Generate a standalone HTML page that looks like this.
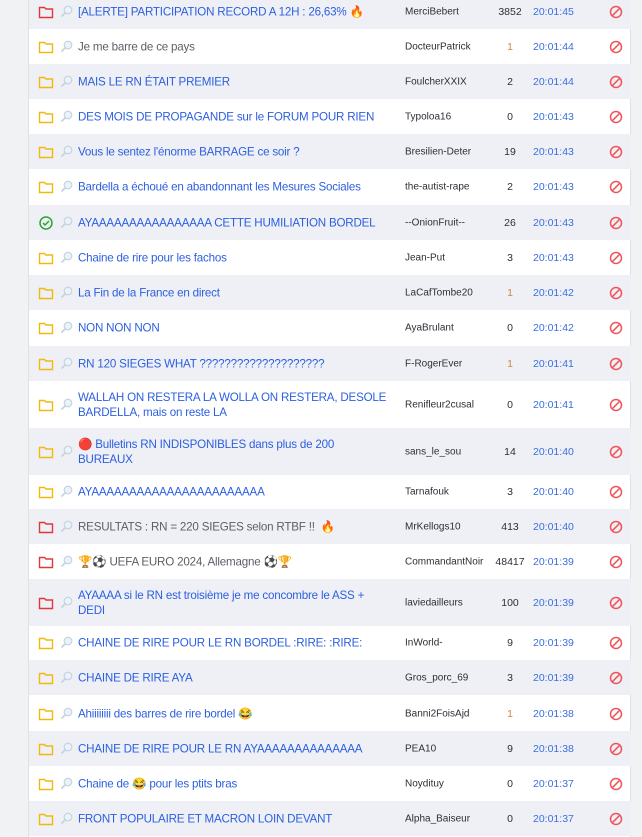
<!DOCTYPE html>
<html><head><meta charset="utf-8">
<style>
*{margin:0;padding:0;box-sizing:border-box}
body{width:642px;height:837px;overflow:hidden;background:#f1f2f4;font-family:"Liberation Sans",Arial,sans-serif;position:relative}
#list{position:absolute;left:28px;top:0;width:603px;height:837px;background:#fff;border-left:1px solid #dfe1e5;border-right:1px solid #dfe1e5}
.r{position:absolute;left:0;width:602px;height:35px}
.r.g{background:#eef0f5}
.r.t{height:47px}
.ic{position:absolute;left:9px;top:50%;margin-top:-7px;width:16px;height:14px}
.mg{position:absolute;left:31px;top:50%;margin-top:-7px;width:13px;height:13px}
.ti{position:absolute;left:49px;top:50%;transform:translateY(-50%);width:330px;font-size:11.6px;letter-spacing:-0.2px;line-height:15px;color:#2c5fe0;white-space:nowrap}
.ti.v{color:#5b5f66}
.au{position:absolute;left:376px;top:50%;transform:translateY(-50%);width:82px;overflow:hidden;white-space:nowrap;font-size:10px;color:#2d2f36}
.nb{position:absolute;left:461px;width:40px;text-align:center;top:50%;transform:translateY(-50%);font-size:10.5px;color:#2d2f36}
.nb.o{color:#c98a3c}
.tm{position:absolute;left:504px;top:50%;transform:translateY(-50%);font-size:10.5px;color:#3a6ee0}
.bl{position:absolute;left:580px;top:50%;margin-top:-7px;width:14px;height:14px}
</style></head><body>
<svg width="0" height="0" style="position:absolute">
<defs>
<symbol id="fy" viewBox="0 0 16 14"><path d="M1.5 2.5h5l1.5 1.5h6.5v8.5h-13z" fill="none" stroke="#f0b90e" stroke-width="1.4"/></symbol>
<symbol id="fr" viewBox="0 0 16 14"><path d="M1.5 2.5h5l1.5 1.5h6.5v8.5h-13z" fill="none" stroke="#e0393a" stroke-width="1.4"/></symbol>
<symbol id="ok" viewBox="0 0 16 14"><circle cx="8" cy="7" r="6" fill="none" stroke="#2da32d" stroke-width="1.5"/><path d="M5 7l2 2 4-4" fill="none" stroke="#2da32d" stroke-width="1.5"/></symbol>
<symbol id="mg" viewBox="0 0 13 13"><circle cx="8" cy="5" r="3.8" fill="#e9f3fc" stroke="#c6d1dc" stroke-width="1.1"/><path d="M5.2 7.8L1.5 11.5" stroke="#c6d1dc" stroke-width="1.7"/></symbol>
<symbol id="bl" viewBox="0 0 14 14"><circle cx="7" cy="7" r="5.5" fill="none" stroke="#f0545a" stroke-width="1.5"/><path d="M3.2 10.8L10.8 3.2" stroke="#f0545a" stroke-width="1.5"/></symbol>
</defs></svg>
<div id="list">
<div class="r g" style="top:-6px"><svg class="ic"><use href="#fr"/></svg><svg class="mg"><use href="#mg"/></svg><div class="ti">[ALERTE] PARTICIPATION RECORD A 12H : 26,63% 🔥</div><div class="au">MerciBebert</div><div class="nb">3852</div><div class="tm">20:01:45</div><svg class="bl"><use href="#bl"/></svg></div>
<div class="r" style="top:29px"><svg class="ic"><use href="#fy"/></svg><svg class="mg"><use href="#mg"/></svg><div class="ti v">Je me barre de ce pays</div><div class="au">DocteurPatrick</div><div class="nb o">1</div><div class="tm">20:01:44</div><svg class="bl"><use href="#bl"/></svg></div>
<div class="r g" style="top:64px"><svg class="ic"><use href="#fy"/></svg><svg class="mg"><use href="#mg"/></svg><div class="ti">MAIS LE RN ÉTAIT PREMIER</div><div class="au">FoulcherXXIX</div><div class="nb">2</div><div class="tm">20:01:44</div><svg class="bl"><use href="#bl"/></svg></div>
<div class="r" style="top:99px"><svg class="ic"><use href="#fy"/></svg><svg class="mg"><use href="#mg"/></svg><div class="ti">DES MOIS DE PROPAGANDE sur le FORUM POUR RIEN</div><div class="au">Typoloa16</div><div class="nb">0</div><div class="tm">20:01:43</div><svg class="bl"><use href="#bl"/></svg></div>
<div class="r g" style="top:134px"><svg class="ic"><use href="#fy"/></svg><svg class="mg"><use href="#mg"/></svg><div class="ti">Vous le sentez l'énorme BARRAGE ce soir ?</div><div class="au">Bresilien-Deter</div><div class="nb">19</div><div class="tm">20:01:43</div><svg class="bl"><use href="#bl"/></svg></div>
<div class="r" style="top:169px"><svg class="ic"><use href="#fy"/></svg><svg class="mg"><use href="#mg"/></svg><div class="ti">Bardella a échoué en abandonnant les Mesures Sociales</div><div class="au">the-autist-rape</div><div class="nb">2</div><div class="tm">20:01:43</div><svg class="bl"><use href="#bl"/></svg></div>
<div class="r g" style="top:205px"><svg class="ic"><use href="#ok"/></svg><svg class="mg"><use href="#mg"/></svg><div class="ti">AYAAAAAAAAAAAAAAAA CETTE HUMILIATION BORDEL</div><div class="au">--OnionFruit--</div><div class="nb">26</div><div class="tm">20:01:43</div><svg class="bl"><use href="#bl"/></svg></div>
<div class="r" style="top:240px"><svg class="ic"><use href="#fy"/></svg><svg class="mg"><use href="#mg"/></svg><div class="ti">Chaine de rire pour les fachos</div><div class="au">Jean-Put</div><div class="nb">3</div><div class="tm">20:01:43</div><svg class="bl"><use href="#bl"/></svg></div>
<div class="r g" style="top:275px"><svg class="ic"><use href="#fy"/></svg><svg class="mg"><use href="#mg"/></svg><div class="ti">La Fin de la France en direct</div><div class="au">LaCafTombe20</div><div class="nb o">1</div><div class="tm">20:01:42</div><svg class="bl"><use href="#bl"/></svg></div>
<div class="r" style="top:310px"><svg class="ic"><use href="#fy"/></svg><svg class="mg"><use href="#mg"/></svg><div class="ti">NON NON NON</div><div class="au">AyaBrulant</div><div class="nb">0</div><div class="tm">20:01:42</div><svg class="bl"><use href="#bl"/></svg></div>
<div class="r g" style="top:346px"><svg class="ic"><use href="#fy"/></svg><svg class="mg"><use href="#mg"/></svg><div class="ti">RN 120 SIEGES WHAT ????????????????????</div><div class="au">F-RogerEver</div><div class="nb o">1</div><div class="tm">20:01:41</div><svg class="bl"><use href="#bl"/></svg></div>
<div class="r t" style="top:381px"><svg class="ic"><use href="#fy"/></svg><svg class="mg"><use href="#mg"/></svg><div class="ti">WALLAH ON RESTERA LA WOLLA ON RESTERA, DESOLE<br>BARDELLA, mais on reste LA</div><div class="au">Renifleur2cusal</div><div class="nb">0</div><div class="tm">20:01:41</div><svg class="bl"><use href="#bl"/></svg></div>
<div class="r g t" style="top:428px"><svg class="ic"><use href="#fy"/></svg><svg class="mg"><use href="#mg"/></svg><div class="ti">🔴 Bulletins RN INDISPONIBLES dans plus de 200<br>BUREAUX</div><div class="au">sans_le_sou</div><div class="nb">14</div><div class="tm">20:01:40</div><svg class="bl"><use href="#bl"/></svg></div>
<div class="r" style="top:474px"><svg class="ic"><use href="#fy"/></svg><svg class="mg"><use href="#mg"/></svg><div class="ti">AYAAAAAAAAAAAAAAAAAAAAAAA</div><div class="au">Tarnafouk</div><div class="nb">3</div><div class="tm">20:01:40</div><svg class="bl"><use href="#bl"/></svg></div>
<div class="r g" style="top:509px"><svg class="ic"><use href="#fr"/></svg><svg class="mg"><use href="#mg"/></svg><div class="ti v">RESULTATS : RN = 220 SIEGES selon RTBF !! &nbsp;🔥</div><div class="au">MrKellogs10</div><div class="nb">413</div><div class="tm">20:01:40</div><svg class="bl"><use href="#bl"/></svg></div>
<div class="r" style="top:544px"><svg class="ic"><use href="#fr"/></svg><svg class="mg"><use href="#mg"/></svg><div class="ti v">🏆⚽ UEFA EURO 2024, Allemagne ⚽🏆</div><div class="au">CommandantNoir</div><div class="nb">48417</div><div class="tm">20:01:39</div><svg class="bl"><use href="#bl"/></svg></div>
<div class="r g t" style="top:579px"><svg class="ic"><use href="#fr"/></svg><svg class="mg"><use href="#mg"/></svg><div class="ti">AYAAAA si le RN est troisième je me concombre le ASS +<br>DEDI</div><div class="au">laviedailleurs</div><div class="nb">100</div><div class="tm">20:01:39</div><svg class="bl"><use href="#bl"/></svg></div>
<div class="r" style="top:625px"><svg class="ic"><use href="#fy"/></svg><svg class="mg"><use href="#mg"/></svg><div class="ti">CHAINE DE RIRE POUR LE RN BORDEL :RIRE: :RIRE:</div><div class="au">InWorld-</div><div class="nb">9</div><div class="tm">20:01:39</div><svg class="bl"><use href="#bl"/></svg></div>
<div class="r g" style="top:660px"><svg class="ic"><use href="#fy"/></svg><svg class="mg"><use href="#mg"/></svg><div class="ti">CHAINE DE RIRE AYA</div><div class="au">Gros_porc_69</div><div class="nb">3</div><div class="tm">20:01:39</div><svg class="bl"><use href="#bl"/></svg></div>
<div class="r" style="top:696px"><svg class="ic"><use href="#fy"/></svg><svg class="mg"><use href="#mg"/></svg><div class="ti">Ahiiiiiiii des barres de rire bordel 😂</div><div class="au">Banni2FoisAjd</div><div class="nb o">1</div><div class="tm">20:01:38</div><svg class="bl"><use href="#bl"/></svg></div>
<div class="r g" style="top:731px"><svg class="ic"><use href="#fy"/></svg><svg class="mg"><use href="#mg"/></svg><div class="ti">CHAINE DE RIRE POUR LE RN AYAAAAAAAAAAAAAA</div><div class="au">PEA10</div><div class="nb">9</div><div class="tm">20:01:38</div><svg class="bl"><use href="#bl"/></svg></div>
<div class="r" style="top:766px"><svg class="ic"><use href="#fy"/></svg><svg class="mg"><use href="#mg"/></svg><div class="ti">Chaine de 😂 pour les ptits bras</div><div class="au">Noydituy</div><div class="nb">0</div><div class="tm">20:01:37</div><svg class="bl"><use href="#bl"/></svg></div>
<div class="r g" style="top:801px"><svg class="ic"><use href="#fy"/></svg><svg class="mg"><use href="#mg"/></svg><div class="ti">FRONT POPULAIRE ET MACRON LOIN DEVANT</div><div class="au">Alpha_Baiseur</div><div class="nb">0</div><div class="tm">20:01:37</div><svg class="bl"><use href="#bl"/></svg></div>
</div>
</body></html>
